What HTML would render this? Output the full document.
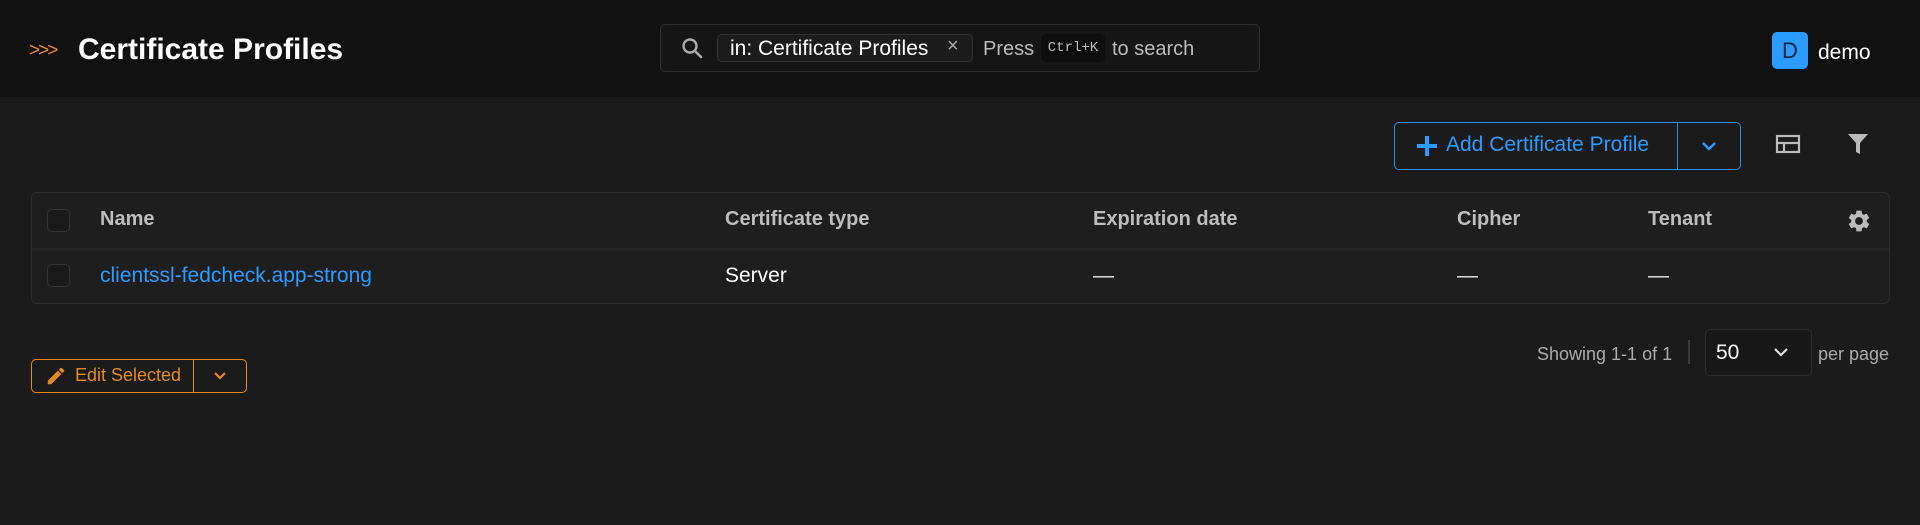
<!DOCTYPE html>
<html><head><meta charset="utf-8">
<style>
*{box-sizing:border-box;margin:0;padding:0}
body{width:1920px;height:525px;background:#1b1b1b;font-family:"Liberation Sans",sans-serif;color:#fff;position:relative;overflow:hidden}
.a{position:absolute;white-space:nowrap}
.hdr{left:0;top:0;width:1920px;height:97px;background:#111}
.th{top:208px;font-size:20px;font-weight:bold;color:#bdbdbd}
.td{top:264px;font-size:21px;color:#fff}
.cb{width:23px;height:23px;border:1px solid #333;border-radius:5px;background:#1a1a1a}
</style></head><body>
<div class="a hdr"></div>
<div class="a" style="left:29px;top:40px;color:#e58a1f;font-size:19px;letter-spacing:-2px">&gt;&gt;&gt;</div>
<div class="a" style="left:78px;top:33px;font-size:30px;font-weight:bold;color:#fff">Certificate Profiles</div>

<div class="a" style="left:660px;top:24px;width:600px;height:48px;border:1px solid #2c2c2c;border-radius:5px;background:#161616"></div>
<svg class="a" style="left:680px;top:36px" width="24" height="24" viewBox="0 0 24 24"><circle cx="10" cy="10" r="6.5" fill="none" stroke="#aaa" stroke-width="2.4"/><path d="M15 15l6 6" stroke="#aaa" stroke-width="2.6" stroke-linecap="round"/></svg>
<div class="a" style="left:717px;top:34px;width:256px;height:28px;border:1px solid #333;border-radius:5px;background:#1c1c1c"></div>
<div class="a" style="left:730px;top:37px;font-size:21px;color:#fff">in: Certificate Profiles</div>
<div class="a" style="left:947px;top:35px;font-size:20px;color:#aaa">×</div>
<div class="a" style="left:983px;top:38px;font-size:20px;color:#bbb">Press</div>
<div class="a" style="left:1041px;top:34px;width:64px;height:28px;background:#0d0d0d;border-radius:5px;font-family:'Liberation Mono',monospace;font-size:14px;color:#bbb;text-align:center;line-height:28px">Ctrl+K</div>
<div class="a" style="left:1112px;top:38px;font-size:20px;color:#bbb">to search</div>

<div class="a" style="left:1772px;top:32px;width:36px;height:37px;background:#2b9bff;border-radius:5px;color:#10233a;font-size:22px;text-align:center;line-height:37px">D</div>
<div class="a" style="left:1818px;top:41px;font-size:21px;color:#fff">demo</div>

<div class="a" style="left:1394px;top:122px;width:347px;height:48px;border:1px solid #2b8fe8;border-radius:5px"></div>
<div class="a" style="left:1677px;top:122px;width:1px;height:48px;background:#2b8fe8"></div>
<svg class="a" style="left:1415px;top:134px" width="24" height="24" viewBox="0 0 24 24"><path d="M12 2v20M2 12h20" stroke="#2b9bff" stroke-width="4"/></svg>
<div class="a" style="left:1446px;top:133px;font-size:21px;color:#2b9bff">Add Certificate Profile</div>
<svg class="a" style="left:1700px;top:139px" width="18" height="14" viewBox="0 0 18 14"><path d="M3 4l6 6 6-6" fill="none" stroke="#2b9bff" stroke-width="2.4"/></svg>
<svg class="a" style="left:1775px;top:133px" width="26" height="22" viewBox="0 0 26 22"><rect x="2" y="3" width="22" height="16" fill="none" stroke="#bbb" stroke-width="2.2"/><path d="M2 10h22M9 10v9" stroke="#bbb" stroke-width="2.2"/></svg>
<svg class="a" style="left:1846px;top:132px" width="24" height="24" viewBox="0 0 24 24"><path d="M2 2h20l-8 9v11l-4-2v-9z" fill="#bbb"/></svg>

<div class="a" style="left:31px;top:192px;width:1859px;height:112px;border:1px solid #2c2c2c;border-radius:6px;background:#1e1e1e"></div>
<div class="a" style="left:32px;top:248px;width:1857px;height:2px;background:#262626"></div>
<div class="a cb" style="left:47px;top:209px"></div>
<div class="a cb" style="left:47px;top:264px"></div>
<div class="a th" style="left:100px">Name</div>
<div class="a th" style="left:725px">Certificate type</div>
<div class="a th" style="left:1093px">Expiration date</div>
<div class="a th" style="left:1457px">Cipher</div>
<div class="a th" style="left:1648px">Tenant</div>
<svg class="a" style="left:1846px;top:208px" width="26" height="26" viewBox="0 0 24 24"><path fill="#bbb" d="M19.14 12.94c.04-.3.06-.61.06-.94 0-.32-.02-.64-.07-.94l2.030-1.58a.49.49 0 0 0 .12-.61l-1.92-3.32a.49.49 0 0 0-.59-.22l-2.39.96c-.5-.38-1.03-.7-1.62-.94l-.36-2.54a.48.48 0 0 0-.48-.41h-3.84c-.24 0-.43.17-.47.41l-.36 2.54c-.59.24-1.13.57-1.62.94l-2.39-.96a.48.48 0 0 0-.59.22L2.74 8.87c-.12.21-.08.47.12.61l2.03 1.58c-.05.3-.09.63-.09.94s.02.64.07.94l-2.03 1.58a.49.49 0 0 0-.12.61l1.92 3.32c.12.22.37.29.59.22l2.39-.96c.5.38 1.03.7 1.62.94l.36 2.54c.05.24.24.41.48.41h3.840c.24 0 .44-.17.47-.41l.36-2.54c.59-.24 1.13-.56 1.62-.94l2.39.96c.22.08.47 0 .59-.22l1.92-3.32c.12-.22.07-.47-.12-.61l-2.01-1.58zM12 15.6A3.6 3.6 0 1 1 12 8.4a3.6 3.6 0 0 1 0 7.2z"/></svg>
<div class="a td" style="left:100px;color:#2b9bff">clientssl-fedcheck.app-strong</div>
<div class="a td" style="left:725px">Server</div>
<div class="a td" style="left:1093px;color:#eee">—</div>
<div class="a td" style="left:1457px;color:#eee">—</div>
<div class="a td" style="left:1648px;color:#eee">—</div>

<div class="a" style="left:31px;top:359px;width:216px;height:34px;border:1px solid #e58a1f;border-radius:5px"></div>
<div class="a" style="left:193px;top:359px;width:1px;height:34px;background:#e58a1f"></div>
<svg class="a" style="left:45px;top:365px" width="22" height="22" viewBox="0 0 24 24"><path fill="#e58a1f" d="M3 17.25V21h3.75L17.81 9.94l-3.75-3.75zM20.71 7.04a1 1 0 0 0 0-1.41l-2.34-2.34a1 1 0 0 0-1.41 0l-1.83 1.83 3.75 3.75z"/></svg>
<div class="a" style="left:75px;top:365px;font-size:18px;color:#e58a1f">Edit Selected</div>
<svg class="a" style="left:212px;top:370px" width="16" height="12" viewBox="0 0 16 12"><path d="M3 3l5 5 5-5" fill="none" stroke="#e58a1f" stroke-width="2.2"/></svg>

<div class="a" style="left:1537px;top:344px;font-size:18px;color:#aaa">Showing 1-1 of 1</div>
<div class="a" style="left:1688px;top:340px;width:2px;height:24px;background:#3a3a3a"></div>
<div class="a" style="left:1705px;top:329px;width:107px;height:47px;border:1px solid #2c2c2c;border-radius:5px;background:#181818"></div>
<div class="a" style="left:1716px;top:341px;font-size:21px;color:#fff">50</div>
<svg class="a" style="left:1772px;top:346px" width="18" height="14" viewBox="0 0 18 14"><path d="M3 3l6 6 6-6" fill="none" stroke="#ddd" stroke-width="2.2"/></svg>
<div class="a" style="left:1818px;top:344px;font-size:18px;color:#aaa">per page</div>
</body></html>
